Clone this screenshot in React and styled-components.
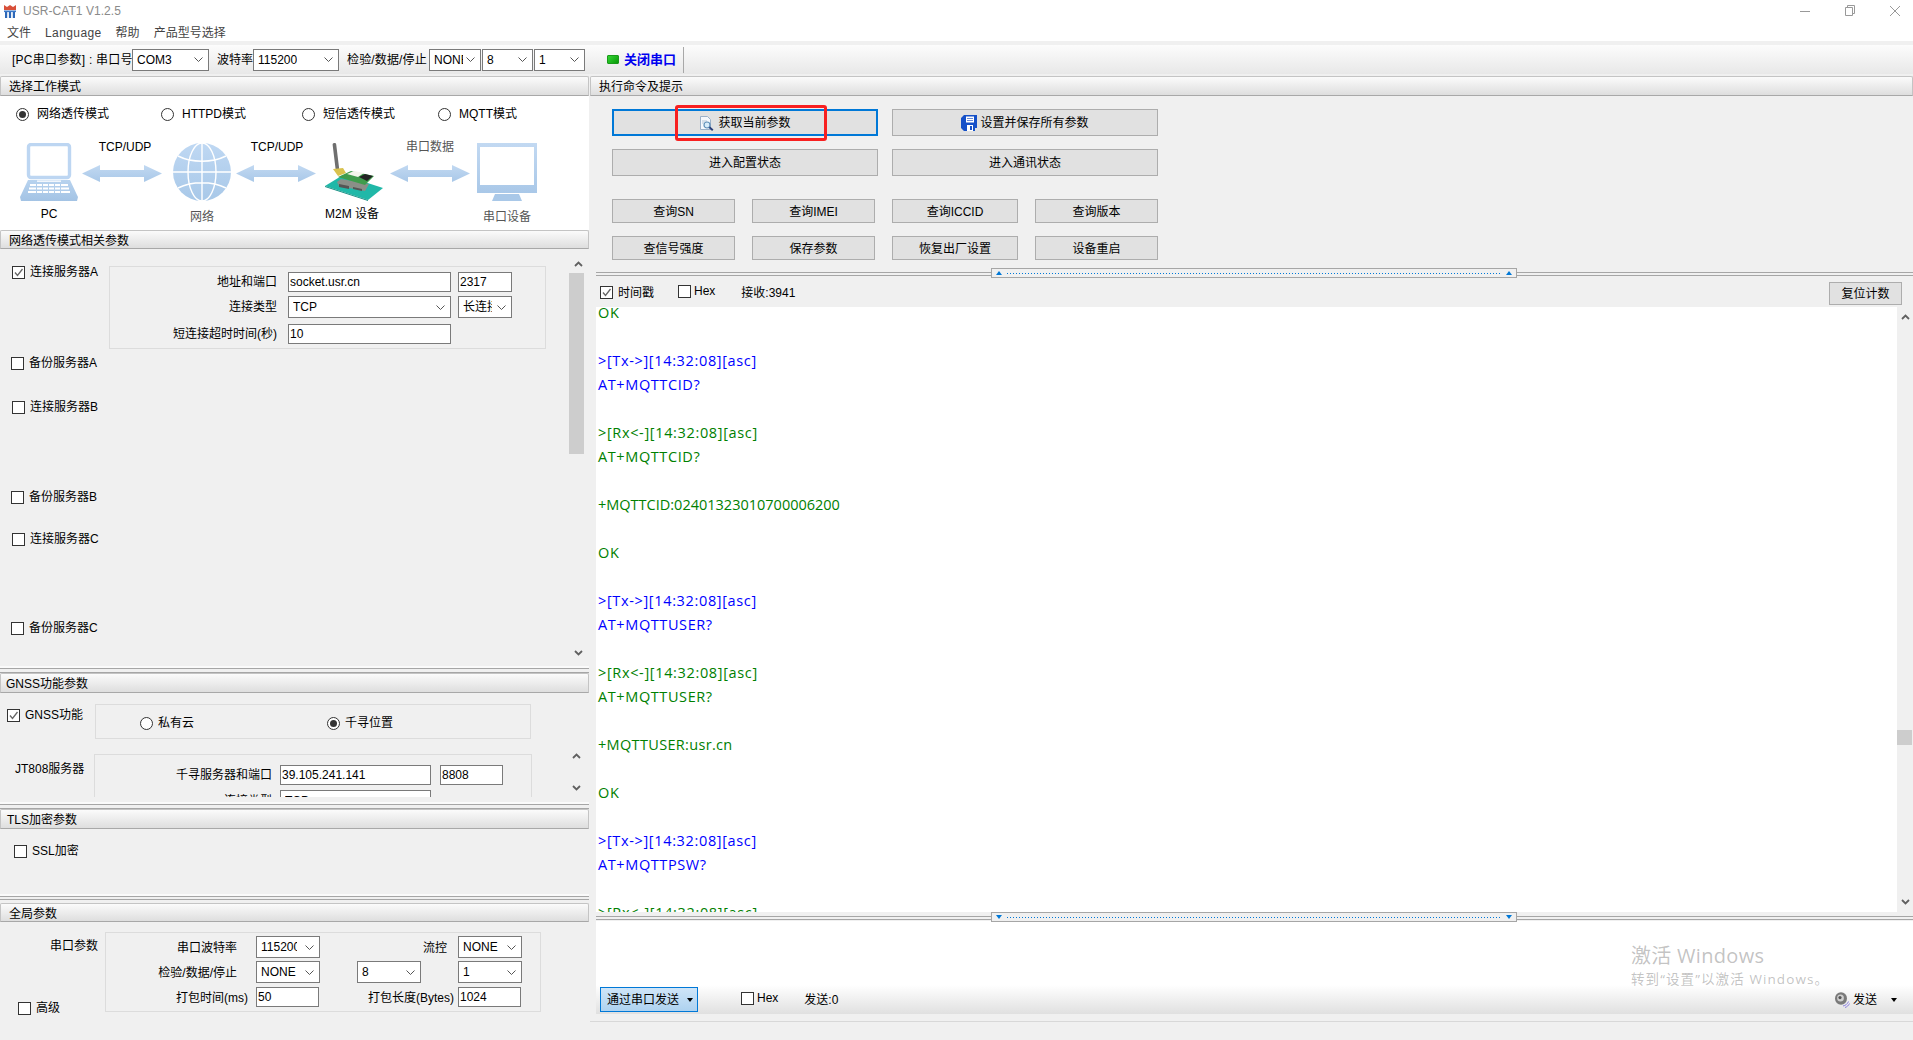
import React from "react";
import styled, { createGlobalStyle } from "styled-components";

const FONT = '"Liberation Sans","Noto Sans CJK SC",sans-serif';

const Global = createGlobalStyle`
  html, body { margin: 0; padding: 0; background: #f0f0f0; }
  * { box-sizing: border-box; }
`;

const Window = styled.div`
  position: relative; width: 1913px; height: 1040px; overflow: hidden;
  display: flex; flex-direction: column;
  background: #f0f0f0; color: #000; font: 12px/16px ${FONT};
`;
const TitleBar = styled.div`
  height: 21px; background: #fff; display: flex; align-items: center; padding: 1px 13px 0 4px; flex: none;
`;
const TitleText = styled.span`
  margin-left: 7px; color: #8a8a8a; flex: 1; letter-spacing: .05px;
`;
const WinControls = styled.div`
  display: flex; align-items: center; gap: 35px; margin-top: -1px;
`;
const MenuBar = styled.div`
  height: 20px; background: #fff; display: flex; align-items: center; flex: none; color: #444; padding-top: 4px;
`;
const MenuItem = styled.span`
  margin-left: ${p => p.$ml}px; letter-spacing: ${p => p.$track || 0}px;
`;
const Toolbar = styled.div`
  height: 29px; margin-top: 4px; flex: none; padding-left: 12px;
  display: flex; align-items: center;
  background: linear-gradient(#fcfcfc, #e8e8e8);
`;
const BarLabel = styled.span`
  width: ${p => p.$w}px; margin-left: ${p => p.$ml || 0}px; white-space: nowrap; flex: none;
  letter-spacing: ${p => p.$track || 0}px;
`;
const Select = styled.div`
  width: ${p => p.$w}px; height: ${p => p.$h || 22}px; margin-left: ${p => p.$ml || 0}px; flex: none;
  background: #fff; border: 1px solid #7a7a7a;
  display: flex; align-items: center; justify-content: space-between;
  padding: 0 5px 0 4px; overflow: hidden;
`;
const SelectText = styled.span`
  display: block; width: ${p => p.$w ? p.$w + "px" : "auto"}; overflow: hidden; white-space: nowrap;
`;
const TextInput = styled.input`
  width: ${p => p.$w}px; height: 20px; margin-left: ${p => p.$ml || 0}px; flex: none;
  border: 1px solid #7a7a7a; background: #fff; padding: 0 1px; font: 12px ${FONT}; color: #000; outline: none;
`;
const Chev = () => (
  <svg width="9" height="5" viewBox="0 0 9 5" style={{ flex: "none" }}>
    <path d="M.5.5l4 4 4-4" fill="none" stroke="#555" strokeWidth="1" />
  </svg>
);
const Drop = ({ w, h, ml, clip, children }) => (
  <Select $w={w} $h={h} $ml={ml}>
    <SelectText $w={clip}>{children}</SelectText>
    <Chev />
  </Select>
);
const ClosePort = styled.div`
  margin-left: 22px; display: flex; align-items: center; height: 26px; padding-right: 7px;
  border-right: 1px solid #a8a8a8;
`;
const Led = styled.span`
  width: 12px; height: 9px; border-radius: 1px; margin-right: 5px;
  background: linear-gradient(135deg, #33d433, #0a9a0a); border: 1px solid #1a9a1a;
`;
const CloseText = styled.span`
  font-size: 13px; font-weight: 700; color: #0000f0;
`;

const Main = styled.div`
  flex: 1; display: flex; min-height: 0; margin-top: 2px;
`;
const LeftCol = styled.div`
  width: 589px; flex: none; display: flex; flex-direction: column;
`;
const RightCol = styled.div`
  flex: 1; min-width: 0; display: flex; flex-direction: column; padding-left: 1px;
`;
const SectionHeader = styled.div`
  height: ${p => p.$h || 20}px; flex: none; display: flex; align-items: center; padding: 2px 0 0 ${p => p.$pl || 8}px;
  background: linear-gradient(#fbfbfb, #dedede);
  border: 1px solid #c4c4c4; border-bottom-color: #a8a8a8; border-radius: 2px 2px 0 0;
`;
const ModePanel = styled.div`
  height: 134px; flex: none; background: #fff; padding-top: 10px;
`;
const RadioRow = styled.div`
  display: grid; grid-template-columns: 145px 141px 136px 1fr; padding-left: 16px; height: 16px; align-items: center;
`;
const Option = styled.label`
  display: inline-flex; align-items: center; gap: ${p => p.$gap}px; white-space: nowrap;
`;
const RadioDot = styled.span`
  width: 13px; height: 13px; border-radius: 50%; border: 1px solid #333; background: #fff; flex: none;
  display: flex; align-items: center; justify-content: center;
  &::after { content: ""; width: 7px; height: 7px; border-radius: 50%; background: ${p => p.$on ? "#333" : "transparent"}; }
`;
const Box = styled.span`
  width: 13px; height: 13px; border: 1px solid #333; background: #fff; flex: none; display: flex;
  align-items: center; justify-content: center;
`;
const Check = ({ on, children, gap = 5 }) => (
  <Option $gap={gap}>
    <Box>
      {on && (
        <svg width="11" height="11" viewBox="0 0 11 11">
          <path d="M2 5.5l2.5 3L9.5 2" fill="none" stroke="#666" strokeWidth="1.3" />
        </svg>
      )}
    </Box>
    {children}
  </Option>
);
const Radio = ({ on, gap = 8, children }) => (
  <Option $gap={gap}>
    <RadioDot $on={on} />
    {children}
  </Option>
);
const Diagram = styled.div`
  display: flex; margin-top: 17px; padding-left: 20px;
`;
const Node = styled.div`
  width: ${p => p.$w}px; margin-left: ${p => p.$ml || 0}px; padding-top: 4px; flex: none;
  display: flex; flex-direction: column; align-items: center; height: 90px;
`;
const NodeLabel = styled.span`
  margin-top: ${p => p.$mt}px; white-space: nowrap; color: ${p => p.$c || "#000"};
  margin-right: ${p => p.$mr || 0}px;
`;
const Link = styled.div`
  width: 80px; margin-left: ${p => p.$ml}px; flex: none; display: flex; flex-direction: column; align-items: center;
`;
const LinkLabel = styled.span`
  height: 16px; color: ${p => p.$c || "#000"}; margin-bottom: 10px; padding-left: ${p => p.$pl || 0}px;
`;

const ArrowIcon = ({ id }) => (
  <svg width="80" height="17" viewBox="0 0 80 17">
    <defs>
      <linearGradient id={id} x1="0" y1="0" x2="0" y2="1">
        <stop offset="0" stopColor="#c2d9f2" />
        <stop offset="1" stopColor="#a9c8e8" />
      </linearGradient>
    </defs>
    <path d="M0 8.5L18 0v5h44V0l18 8.5L62 17v-5H18v5z" fill={`url(#${id})`} />
  </svg>
);
const LaptopIcon = () => (
  <svg width="58" height="58" viewBox="0 0 58 58">
    <defs>
      <linearGradient id="lapBase" x1="0" y1="0" x2="0" y2="1">
        <stop offset="0" stopColor="#b8d3ef" />
        <stop offset="1" stopColor="#a3c3e4" />
      </linearGradient>
    </defs>
    <rect x="8.5" y="1.5" width="41" height="33" rx="2.5" fill="#fff" stroke="#bdd6f2" strokeWidth="3.4" />
    <path d="M8 37h42l7 15 1 2-1 4H1l-1-4 1-2z" fill="url(#lapBase)" />
    <g fill="#fff">
      <rect x="17" y="37.5" width="24" height="1.3" />
      <rect x="10" y="41" width="38" height="2" />
      <rect x="9" y="44.5" width="40" height="2" />
      <rect x="8" y="48" width="42" height="2" />
    </g>
    <g fill="#b3cfec">
      <rect x="16" y="41" width="1" height="9" />
      <rect x="22" y="41" width="1" height="9" />
      <rect x="28" y="41" width="1" height="9" />
      <rect x="34" y="41" width="1" height="9" />
      <rect x="40" y="41" width="1" height="9" />
    </g>
  </svg>
);
const GlobeIcon = () => (
  <svg width="60" height="58" viewBox="0 0 60 58">
    <defs>
      <linearGradient id="globeFill" x1="0" y1="0" x2="0" y2="1">
        <stop offset="0" stopColor="#bfd8f3" />
        <stop offset="1" stopColor="#a8c8e8" />
      </linearGradient>
    </defs>
    <circle cx="30" cy="29" r="29" fill="url(#globeFill)" />
    <g fill="none" stroke="#fff" strokeWidth="1.4">
      <ellipse cx="30" cy="29" rx="14" ry="29" />
      <path d="M30 0v58M1 29h58M6 13c14 7 34 7 48 0M6 45c14-7 34-7 48 0" />
    </g>
  </svg>
);
const ModuleIcon = () => (
  <svg width="58" height="58" viewBox="0 0 58 58">
    <path d="M0 43L18 32l40 13-15 12z" fill="#20b8a8" />
    <path d="M0 43l43 14v1L0 44z" fill="#178f84" />
    <rect x="9" y="0" width="3.6" height="27" rx="1.6" fill="#6f6f6f" transform="rotate(-7 10 13)" />
    <path d="M8 26l10-1 3 5-8 3z" fill="#d9c24e" />
    <path d="M12 39l4-3 28 5-4 7-26-5z" fill="#8a8f88" />
    <path d="M14 41l10 2v3l-10-2zM28 44l9 2v2l-9-2z" fill="#555" />
    <path d="M13 34l13-6 23 5-9 9z" fill="#3f9c4c" />
    <path d="M22 31l7-3 10 2-6 4z" fill="#f4f4ec" />
    <path d="M34 34l6-3 8 2-6 5z" fill="#232323" />
  </svg>
);
const MonitorIcon = () => (
  <svg width="60" height="58" viewBox="0 0 60 58">
    <defs>
      <linearGradient id="monFill" x1="0" y1="0" x2="0" y2="1">
        <stop offset="0" stopColor="#c2d9f2" />
        <stop offset="1" stopColor="#a9c8e8" />
      </linearGradient>
    </defs>
    <path d="M0 0h60v50H0zM3 4v38h54V4z" fill="url(#monFill)" fillRule="evenodd" />
    <path d="M18 51h24l3 7H15z" fill="#a9c8e8" />
  </svg>
);

const Splitter = styled.div`
  height: ${p => p.$h || 5}px; flex: none; margin-bottom: ${p => p.$mb || 0}px;
  border-top: 1px solid #a6a6a6; border-bottom: 1px solid #a6a6a6;
  box-shadow: 0 -2px 0 #fafafa;
`;
const NetworkSection = styled.div`
  height: 419px; flex: none; display: flex;
`;
const ServerList = styled.div`
  flex: 1; padding-top: 16px;
`;
const ServerRow = styled.div`
  display: flex; align-items: flex-start; height: ${p => p.$h}px; padding-left: ${p => p.$pl || 12}px;
`;
const CheckSlot = styled.div`
  width: ${p => p.$w || 97}px; flex: none; padding-top: ${p => p.$pt || 0}px; line-height: 14px;
`;
const FormGroup = styled.div`
  width: ${p => p.$w}px; height: ${p => p.$h}px; flex: none; margin-top: ${p => p.$mt || 0}px;
  border: 1px solid #dcdcdc; padding-top: ${p => p.$pt || 0}px;
`;
const FormRow = styled.div`
  display: flex; align-items: center; margin-top: ${p => p.$mt || 0}px;
`;
const FieldLabel = styled.span`
  width: ${p => p.$w}px; margin-right: ${p => p.$mr}px; margin-left: ${p => p.$ml || 0}px; flex: none;
  text-align: right; white-space: nowrap; padding-top: ${p => p.$pt || 0}px;
`;
const ScrollTrack = styled.div`
  width: ${p => p.$w || 18}px; flex: none; align-self: stretch;
  margin-left: ${p => p.$ml || 0}px; margin-right: ${p => p.$mr || 0}px;
  background: #f0f0f0; display: flex; flex-direction: column; align-items: center;
  padding: ${p => p.$py || 12}px 0;
`;
const ScrollSpace = styled.div`
  flex: 1;
`;
const Thumb = styled.div`
  width: 15px; height: ${p => p.$h}px; background: #cdcdcd; margin-top: ${p => p.$mt}px; flex: none;
  align-self: flex-start;
`;
const ScrollArrow = ({ up }) => (
  <svg width="9" height="6" viewBox="0 0 9 6" style={{ flex: "none" }}>
    <path d={up ? "M1 5l3.5-3.5L8 5" : "M1 1l3.5 3.5L8 1"} fill="none" stroke="#606060" strokeWidth="1.8" />
  </svg>
);

const GnssSection = styled.div`
  height: 111px; flex: none; padding-top: 11px;
`;
const GnssTop = styled.div`
  display: flex; align-items: flex-start; padding-left: 7px;
`;
const GnssRadios = styled.div`
  display: grid; grid-template-columns: 187px 1fr; padding: 10px 0 0 44px;
`;
const GnssScroll = styled.div`
  height: 50px; margin-top: 8px; overflow: hidden; display: flex; align-items: flex-start;
`;
const JtLabel = styled.div`
  width: 94px; padding: 14px 0 0 15px; flex: none;
`;
const TlsSection = styled.div`
  height: 67px; flex: none; padding: 15px 0 0 14px; line-height: 14px;
`;
const GlobalSection = styled.div`
  height: 99px; flex: none; display: flex; padding-top: 10px;
`;
const GlobalSide = styled.div`
  width: 105px; flex: none; display: flex; flex-direction: column;
`;
const SideTitle = styled.div`
  text-align: right; padding: 6px 7px 0 0; height: 22px;
`;
const SideCheck = styled.div`
  margin: 47px 0 0 18px; line-height: 14px;
`;

const CommandPanel = styled.div`
  height: 172px; flex: none; padding: 13px 0 0 22px;
`;
const WideRow = styled.div`
  display: grid; grid-template-columns: 266px 266px; column-gap: 14px; margin-top: ${p => p.$mt || 0}px;
`;
const SmallRow = styled.div`
  display: grid; grid-template-columns: 123px 123px 126px 123px; column-gap: 17px; margin-top: ${p => p.$mt}px;
`;
const Btn = styled.button`
  position: relative; height: ${p => p.$h}px; padding: 1px 0 0; font: 12px/16px ${FONT}; color: #000;
  background: #e1e1e1; border: ${p => p.$focus ? "2px solid #0078d7" : "1px solid #adadad"};
  display: flex; align-items: center; justify-content: center; gap: 3px;
`;
const RedMark = styled.span`
  position: absolute; left: 61px; top: -6px; width: 152px; height: 36px;
  border: 3px solid #f82020; border-radius: 3px;
`;
const DocSearchIcon = () => (
  <svg width="16" height="15" viewBox="0 0 16 15">
    <path d="M1.5.5h7l3 3v10h-10z" fill="#f5f8fc" stroke="#9bb0c8" />
    <path d="M3 5h5M3 7h3" stroke="#b8c8d8" />
    <circle cx="8" cy="9" r="3" fill="#d8ecfa" stroke="#5f8fb8" strokeWidth="1.2" />
    <path d="M10.4 11.2l3.4 3" stroke="#2a3f7a" strokeWidth="2" />
  </svg>
);
const FloppyIcon = () => (
  <svg width="16" height="16" viewBox="0 0 16 16">
    <path d="M3 0h13v13h-2v3H3l-3-3V3z" fill="#1550c8" />
    <path d="M5 1.5h8v6H5z" fill="#fff" />
    <path d="M6 3.5h6M6 5.5h6" stroke="#6a8ad8" />
    <path d="M6 10h6v6H6z" fill="#fff" />
    <path d="M9 11h2v4H9z" fill="#1550c8" />
  </svg>
);

const SplitBar = styled.div`
  position: relative; flex: none; height: ${p => p.$h}px; margin-left: 6px; padding-top: ${p => p.$pt}px;
`;
const SplitLines = styled.div`
  height: 4px; border-top: 1px solid #a6a6a6; border-bottom: 1px solid #a6a6a6;
`;
const SplitHandle = styled.div`
  position: absolute; left: 395px; top: ${p => p.$top}px; width: 526px; height: 10px;
  background: #f0f0f0; border: 1px solid #a6a6a6; display: flex; align-items: center; gap: 5px; padding: 0 4px;
`;
const HandleDots = styled.span`
  flex: 1; height: 1px; background: repeating-linear-gradient(90deg, #0078d7 0 1px, transparent 1px 3px);
`;
const Tri = ({ up }) => (
  <svg width="6" height="4" viewBox="0 0 6 4" style={{ flex: "none" }}>
    <path d={up ? "M3 0l3 4H0z" : "M0 0h6L3 4z"} fill="#0078d7" />
  </svg>
);

const LogTools = styled.div`
  height: 29px; flex: none; display: flex; align-items: center; padding: 0 11px 0 10px;
`;
const Counter = styled.span`
  margin-left: ${p => p.$ml}px;
`;
const ToolSpacer = styled.span`
  flex: 1;
`;
const ResetBtn = styled(Btn)`
  width: 73px; margin-top: 2px;
`;
const LogArea = styled.div`
  height: 605px; flex: none; margin-left: 6px; display: flex; background: #fff;
`;
const LogText = styled.div`
  flex: 1; min-width: 0; overflow: hidden; padding-left: 2px;
  font: 14.5px/24px "Open Sans","Noto Sans CJK SC",sans-serif;
`;
const LogScroll = styled.div`
  margin-top: -6px;
`;
const LogLine = styled.div`
  height: 24px; white-space: pre; color: ${p => p.$tone === "tx" ? "#0000ff" : "#008000"};
  letter-spacing: ${p => p.$track}px;
`;
const SendArea = styled.div`
  height: 64px; flex: none; margin-left: 6px; background: #fff;
`;
const SendBar = styled.div`
  height: 29px; flex: none; margin-left: 6px; display: flex; align-items: center; padding: 0 16px 0 4px;
  background: linear-gradient(#ffffff, #e0e0e0);
`;
const SendMode = styled.div`
  width: 98px; height: 25px; border: 1px solid #0078d7; background: linear-gradient(#cfe5f8, #aed2f0);
  display: flex; align-items: center; padding-left: 6px; gap: 8px; flex: none;
`;
const SendAction = styled.div`
  display: flex; align-items: center; gap: 3px;
`;
const Caret = styled.span`
  width: 0; height: 0; flex: none; margin-left: ${p => p.$ml || 0}px;
  border: 3px solid transparent; border-top: 4px solid #000; border-bottom: 0;
`;
const SpeakerIcon = () => (
  <svg width="16" height="16" viewBox="0 0 16 16">
    <ellipse cx="7" cy="6.5" rx="6" ry="6.2" fill="#7a7a7a" />
    <ellipse cx="6.5" cy="6" rx="3.4" ry="3.6" fill="#cfcfcf" />
    <circle cx="6" cy="5.6" r="1.6" fill="#555" />
    <path d="M9 14c2.5-.5 4.5-2 5.5-4.5M11 15.5c2-.6 3.6-2 4.5-4" fill="none" stroke="#8a7ee0" />
  </svg>
);
const StatusBar = styled.div`
  height: 19px; flex: none; margin-top: 7px; border-top: 1px solid #d8d8d8;
`;
const Watermark = styled.div`
  position: absolute; left: 1631px; top: 943px; pointer-events: none; color: rgba(110,110,110,.42);
  font-family: "Open Sans","Noto Sans CJK SC",sans-serif;
`;
const WatermarkBig = styled.div`
  font-size: 20px; line-height: 26px; letter-spacing: .3px;
`;
const WatermarkSmall = styled.div`
  font-size: 13.5px; line-height: 18px; margin-top: 1px; white-space: nowrap; letter-spacing: 1.1px;
`;

const AppIcon = () => (
  <svg width="12" height="13" viewBox="0 0 12 13">
    <path d="M0 0l3 2 3-2 3 2 3-2v5H0z" fill="#d8503a" />
    <path d="M0 5.5h12v1.6H0z" fill="#3a78c8" />
    <path d="M1 7h2.2v6H1zM4.9 7h2.2v6H4.9zM8.8 7H11v6H8.8z" fill="#2d68b8" />
  </svg>
);

const HEAD = 0.65, PLAIN = 0.6;
const log = [
  ["rx", "OK", PLAIN], [], ["tx", ">[Tx->][14:32:08][asc]", HEAD], ["tx", "AT+MQTTCID?", PLAIN], [],
  ["rx", ">[Rx<-][14:32:08][asc]", HEAD], ["rx", "AT+MQTTCID?", PLAIN], [], ["rx", "+MQTTCID:02401323010700006200", 0], [],
  ["rx", "OK", PLAIN], [], ["tx", ">[Tx->][14:32:08][asc]", HEAD], ["tx", "AT+MQTTUSER?", PLAIN], [],
  ["rx", ">[Rx<-][14:32:08][asc]", HEAD], ["rx", "AT+MQTTUSER?", PLAIN], [], ["rx", "+MQTTUSER:usr.cn", 0.33], [],
  ["rx", "OK", PLAIN], [], ["tx", ">[Tx->][14:32:08][asc]", HEAD], ["tx", "AT+MQTTPSW?", PLAIN], [],
  ["rx", ">[Rx<-][14:32:08][asc]", HEAD],
];

export default function App() {
  return (
    <Window>
      <Global />
      <TitleBar>
        <AppIcon />
        <TitleText>USR-CAT1 V1.2.5</TitleText>
        <WinControls>
          <svg width="10" height="10" viewBox="0 0 10 10"><path d="M0 5.5h10" stroke="#999" /></svg>
          <svg width="10" height="11" viewBox="0 0 10 11"><path d="M.5 2.5h7v8h-7zM2.5 2.5v-2h7v8h-2" fill="none" stroke="#999" /></svg>
          <svg width="10" height="10" viewBox="0 0 10 10"><path d="M0 0l10 10M10 0L0 10" stroke="#999" /></svg>
        </WinControls>
      </TitleBar>
      <MenuBar>
        <MenuItem $ml={7}>文件</MenuItem>
        <MenuItem $ml={14} $track={0.4}>Language</MenuItem>
        <MenuItem $ml={14}>帮助</MenuItem>
        <MenuItem $ml={14}>产品型号选择</MenuItem>
      </MenuBar>
      <Toolbar>
        <BarLabel $w={120} $track={0.25}>[PC串口参数] : 串口号</BarLabel>
        <Drop w={77}>COM3</Drop>
        <BarLabel $w={36} $ml={8}>波特率</BarLabel>
        <Drop w={86}>115200</Drop>
        <BarLabel $w={82} $ml={8} $track={0.15}>检验/数据/停止</BarLabel>
        <Drop w={52} clip={29}>NONE</Drop>
        <Drop w={51} ml={1}>8</Drop>
        <Drop w={51} ml={1}>1</Drop>
        <ClosePort>
          <Led />
          <CloseText>关闭串口</CloseText>
        </ClosePort>
      </Toolbar>
      <Main>
        <LeftCol>
          <SectionHeader>选择工作模式</SectionHeader>
          <ModePanel>
            <RadioRow>
              <Radio on>网络透传模式</Radio>
              <Radio>HTTPD模式</Radio>
              <Radio>短信透传模式</Radio>
              <Radio>MQTT模式</Radio>
            </RadioRow>
            <Diagram>
              <Node $w={58}><LaptopIcon /><NodeLabel $mt={5}>PC</NodeLabel></Node>
              <Link $ml={4}><LinkLabel $pl={6}>TCP/UDP</LinkLabel><ArrowIcon id="arrowA" /></Link>
              <Node $w={60} $ml={10}><GlobeIcon /><NodeLabel $mt={8} $c="#555">网络</NodeLabel></Node>
              <Link $ml={4}><LinkLabel $pl={2}>TCP/UDP</LinkLabel><ArrowIcon id="arrowB" /></Link>
              <Node $w={58} $ml={9}><ModuleIcon /><NodeLabel $mt={5} $mr={4}>M2M 设备</NodeLabel></Node>
              <Link $ml={7}><LinkLabel $c="#555">串口数据</LinkLabel><ArrowIcon id="arrowC" /></Link>
              <Node $w={60} $ml={7}><MonitorIcon /><NodeLabel $mt={8} $c="#555">串口设备</NodeLabel></Node>
            </Diagram>
          </ModePanel>
          <SectionHeader $h={19}>网络透传模式相关参数</SectionHeader>
          <NetworkSection>
            <ServerList>
              <ServerRow $h={90}>
                <CheckSlot><Check on>连接服务器A</Check></CheckSlot>
                <FormGroup $w={437} $h={83} $pt={5} $mt={1}>
                  <FormRow>
                    <FieldLabel $w={167} $mr={11}>地址和端口</FieldLabel>
                    <TextInput $w={163} defaultValue="socket.usr.cn" />
                    <TextInput $w={54} $ml={7} defaultValue="2317" />
                  </FormRow>
                  <FormRow $mt={4}>
                    <FieldLabel $w={167} $mr={11}>连接类型</FieldLabel>
                    <Drop w={163}>TCP</Drop>
                    <Drop w={54} ml={7} clip={29}>长连接</Drop>
                  </FormRow>
                  <FormRow $mt={6}>
                    <FieldLabel $w={167} $mr={11}>短连接超时时间(秒)</FieldLabel>
                    <TextInput $w={163} defaultValue="10" />
                  </FormRow>
                </FormGroup>
              </ServerRow>
              <ServerRow $h={44} $pl={11}><Check>备份服务器A</Check></ServerRow>
              <ServerRow $h={90}><Check>连接服务器B</Check></ServerRow>
              <ServerRow $h={42} $pl={11}><Check>备份服务器B</Check></ServerRow>
              <ServerRow $h={89}><Check>连接服务器C</Check></ServerRow>
              <ServerRow $h={30} $pl={11}><Check>备份服务器C</Check></ServerRow>
            </ServerList>
            <ScrollTrack $mr={2} $py={12}>
              <ScrollArrow up />
              <Thumb $h={181} $mt={6} />
              <ScrollSpace />
              <ScrollArrow />
            </ScrollTrack>
          </NetworkSection>
          <Splitter />
          <SectionHeader $pl={5}>GNSS功能参数</SectionHeader>
          <GnssSection>
            <GnssTop>
              <CheckSlot $w={88} $pt={4}><Check on>GNSS功能</Check></CheckSlot>
              <FormGroup $w={436} $h={35}>
                <GnssRadios>
                  <Radio gap={5}>私有云</Radio>
                  <Radio gap={5} on>千寻位置</Radio>
                </GnssRadios>
              </FormGroup>
            </GnssTop>
            <GnssScroll>
              <JtLabel>JT808服务器</JtLabel>
              <FormGroup $w={438} $h={100} $mt={7} $pt={10}>
                <FormRow>
                  <FieldLabel $w={177} $mr={8}>千寻服务器和端口</FieldLabel>
                  <TextInput $w={151} defaultValue="39.105.241.141" />
                  <TextInput $w={63} $ml={9} defaultValue="8808" />
                </FormRow>
                <FormRow $mt={5}>
                  <FieldLabel $w={177} $mr={8}>连接类型</FieldLabel>
                  <Drop w={151}>TCP</Drop>
                </FormRow>
              </FormGroup>
              <ScrollTrack $ml={35} $py={6}>
                <ScrollArrow up />
                <ScrollSpace />
                <ScrollArrow />
              </ScrollTrack>
            </GnssScroll>
          </GnssSection>
          <Splitter />
          <SectionHeader $pl={6}>TLS加密参数</SectionHeader>
          <TlsSection><Check>SSL加密</Check></TlsSection>
          <Splitter $h={4} $mb={3} />
          <SectionHeader $h={19}>全局参数</SectionHeader>
          <GlobalSection>
            <GlobalSide>
              <SideTitle>串口参数</SideTitle>
              <SideCheck><Check>高级</Check></SideCheck>
            </GlobalSide>
            <FormGroup $w={436} $h={80} $pt={3}>
              <FormRow>
                <FieldLabel $w={131} $mr={19} $pt={2}>串口波特率</FieldLabel>
                <Drop w={64} clip={36}>115200</Drop>
                <FieldLabel $w={127} $mr={11} $pt={2}>流控</FieldLabel>
                <Drop w={64}>NONE</Drop>
              </FormRow>
              <FormRow $mt={3}>
                <FieldLabel $w={131} $mr={19} $pt={1}>检验/数据/停止</FieldLabel>
                <Drop w={64}>NONE</Drop>
                <Drop w={64} ml={37}>8</Drop>
                <Drop w={64} ml={37}>1</Drop>
              </FormRow>
              <FormRow $mt={4}>
                <FieldLabel $w={142} $mr={8} $pt={2}>打包时间(ms)</FieldLabel>
                <TextInput $w={63} defaultValue="50" />
                <FieldLabel $w={135} $mr={4} $pt={2}>打包长度(Bytes)</FieldLabel>
                <TextInput $w={63} defaultValue="1024" />
              </FormRow>
            </FormGroup>
          </GlobalSection>
        </LeftCol>
        <RightCol>
          <SectionHeader>执行命令及提示</SectionHeader>
          <CommandPanel>
            <WideRow>
              <Btn $h={27} $focus>
                <DocSearchIcon />获取当前参数
                <RedMark />
              </Btn>
              <Btn $h={27}><FloppyIcon />设置并保存所有参数</Btn>
            </WideRow>
            <WideRow $mt={13}>
              <Btn $h={27}>进入配置状态</Btn>
              <Btn $h={27}>进入通讯状态</Btn>
            </WideRow>
            <SmallRow $mt={23}>
              <Btn $h={24}>查询SN</Btn>
              <Btn $h={24}>查询IMEI</Btn>
              <Btn $h={24}>查询ICCID</Btn>
              <Btn $h={24}>查询版本</Btn>
            </SmallRow>
            <SmallRow $mt={13}>
              <Btn $h={24}>查信号强度</Btn>
              <Btn $h={24}>保存参数</Btn>
              <Btn $h={24}>恢复出厂设置</Btn>
              <Btn $h={24}>设备重启</Btn>
            </SmallRow>
          </CommandPanel>
          <SplitBar $h={10} $pt={4}>
            <SplitLines />
            <SplitHandle $top={0}><Tri up /><HandleDots /><Tri up /></SplitHandle>
          </SplitBar>
          <LogTools>
            <Check on>时间戳</Check>
            <Counter $ml={24}><Check gap={3}>Hex</Check></Counter>
            <Counter $ml={26}>接收:3941</Counter>
            <ToolSpacer />
            <ResetBtn $h={23}>复位计数</ResetBtn>
          </LogTools>
          <LogArea>
            <LogText>
              <LogScroll>
                {log.map(([tone, text, track], i) => (
                  <LogLine key={i} $tone={tone} $track={track || 0}>{text}</LogLine>
                ))}
              </LogScroll>
            </LogText>
            <ScrollTrack $w={16} $py={7}>
              <ScrollArrow up />
              <Thumb $h={15} $mt={410} />
              <ScrollSpace />
              <ScrollArrow />
            </ScrollTrack>
          </LogArea>
          <SplitBar $h={9} $pt={4}>
            <SplitLines />
            <SplitHandle $top={0}><Tri /><HandleDots /><Tri /></SplitHandle>
          </SplitBar>
          <SendArea />
          <SendBar>
            <SendMode>通过串口发送<Caret /></SendMode>
            <Counter $ml={43}><Check gap={3}>Hex</Check></Counter>
            <Counter $ml={26}>发送:0</Counter>
            <ToolSpacer />
            <SendAction><SpeakerIcon />发送<Caret $ml={11} /></SendAction>
          </SendBar>
          <StatusBar />
        </RightCol>
      </Main>
      <Watermark>
        <WatermarkBig>激活 Windows</WatermarkBig>
        <WatermarkSmall>转到“设置”以激活 Windows。</WatermarkSmall>
      </Watermark>
    </Window>
  );
}
